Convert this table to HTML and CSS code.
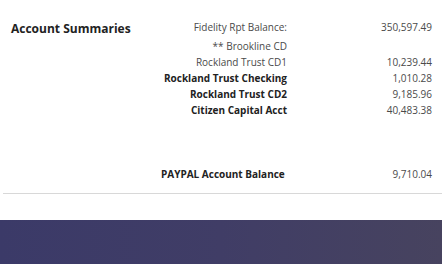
FILE: index.html
```html
<!DOCTYPE html>
<html>
<head>
<meta charset="utf-8">
<link rel="stylesheet" href="styles.css">
</head>
<body>
<div class="page">
  <section class="summary">
    <h2 class="title">Account Summaries</h2>
    <div class="rows">
      <div class="row first"><span class="label">Fidelity Rpt Balance:</span><span class="value">350,597.49</span></div>
      <div class="row"><span class="label">** Brookline CD</span><span class="value"></span></div>
      <div class="row"><span class="label">Rockland Trust CD1</span><span class="value">10,239.44</span></div>
      <div class="row"><span class="label bold">Rockland Trust Checking</span><span class="value">1,010.28</span></div>
      <div class="row"><span class="label bold">Rockland Trust CD2</span><span class="value">9,185.96</span></div>
      <div class="row"><span class="label bold">Citizen Capital Acct</span><span class="value">40,483.38</span></div>
      <div class="row total"><span class="label bold">PAYPAL Account Balance</span><span class="value">9,710.04</span></div>
    </div>
  </section>
  <div class="divider"></div>
  <footer class="band"></footer>
</div>
</body>
</html>
```
FILE: styles.css
```css
html, body {
  margin: 0;
  padding: 0;
  background: #fff;
}
body {
  font-family: "Open Sans", "Liberation Sans", sans-serif;
  color: #333;
  width: 442px;
  height: 264px;
  overflow: hidden;
}
.page {
  display: flex;
  flex-direction: column;
}
.summary {
  display: flex;
  padding: 19px 10px 0 11px;
}
.title {
  margin: 0;
  font-size: 12px;
  font-weight: 700;
  color: #222;
  width: 150px;
  line-height: 20px;
}
.rows {
  flex: 1;
  display: flex;
  flex-direction: column;
}
.row {
  display: grid;
  grid-template-columns: 126px 145px;
  height: 16px;
  line-height: 16px;
  font-size: 10px;
  color: #4a4a4a;
}
.row.first {
  height: 19px;
  padding-bottom: 3px;
  box-sizing: border-box;
}
.row.total {
  margin-top: 48px;
}
.row.total .label {
  padding-right: 3px;
}
.label {
  text-align: right;
  white-space: nowrap;
}
.label.bold {
  font-weight: 700;
  color: #222;
}
.value {
  text-align: right;
}
.divider {
  margin: 11px 0 0 3px;
  height: 1px;
  background: #d8d8d8;
}
.band {
  margin-top: 26px;
  height: 44px;
  background: linear-gradient(90deg, #3b3a68 0%, #403d66 50%, #47435f 100%);
}
```
